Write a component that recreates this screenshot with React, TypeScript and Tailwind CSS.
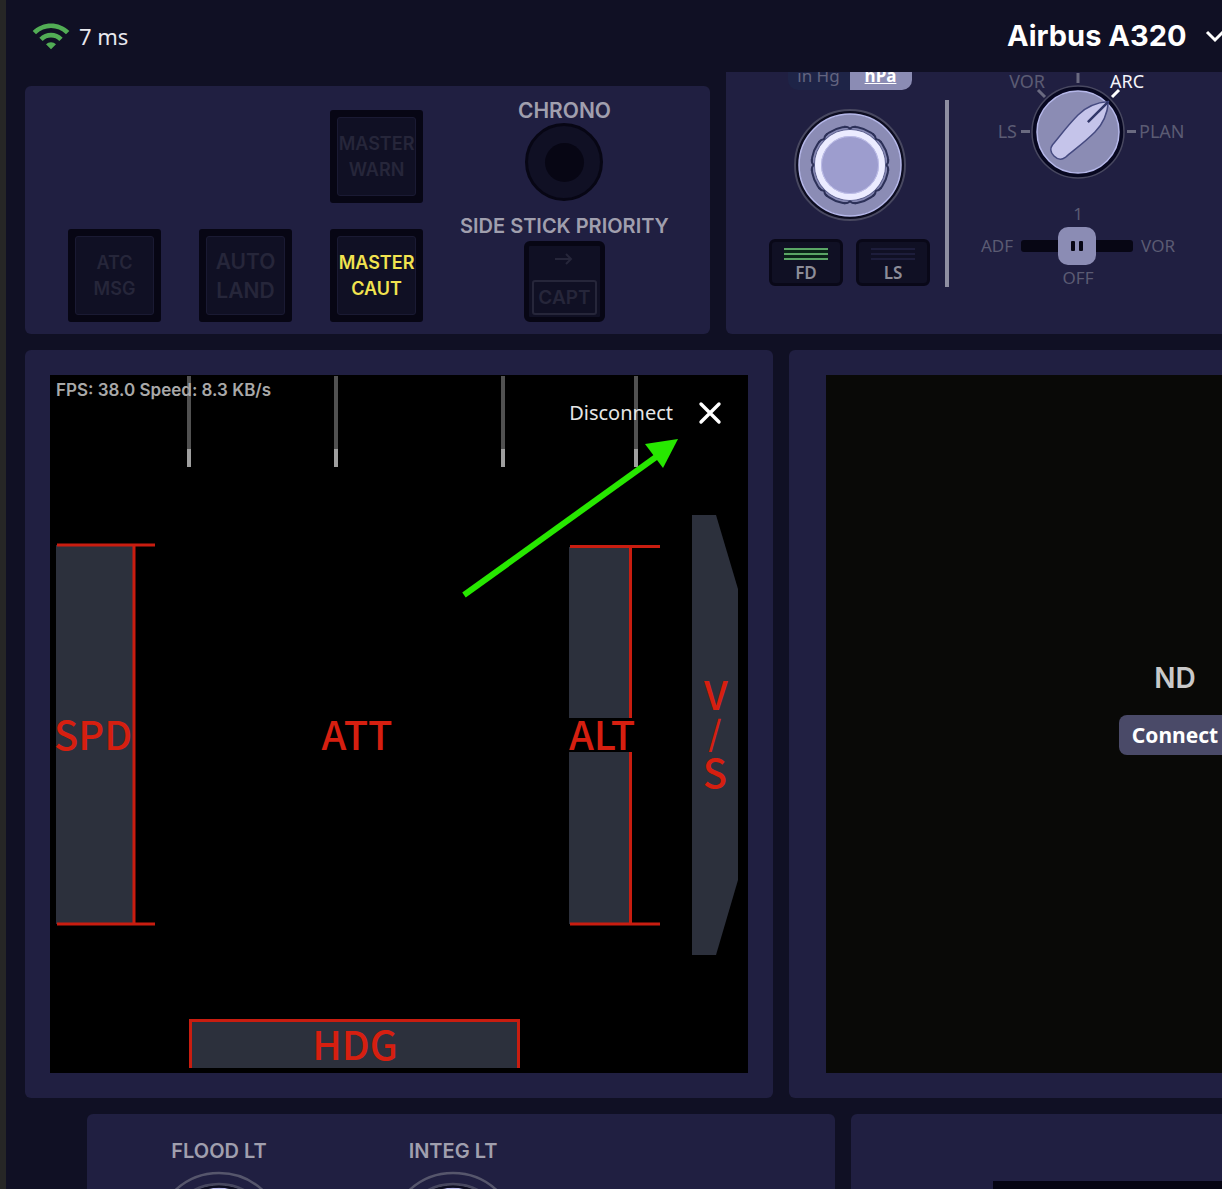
import React from "react";
import { MdWifi } from "react-icons/md";

type AnnunciatorProps = { lines: string[]; lit?: boolean; large?: boolean; className?: string };

function Annunciator({ lines, lit = false, large = false, className = "" }: AnnunciatorProps) {
  return (
    <button
      type="button"
      className={`size-[93px] rounded-[3px] border-[7px] border-[#070614] bg-[#070614] font-['Inter',sans-serif] font-semibold ${
        large ? "text-[21px] leading-[29px]" : "text-[18px] leading-[26px]"
      } ${lit ? "text-[#f2e34f]" : "text-[#26263a]"} ${className}`}
    >
      <span className="flex size-full flex-col items-center justify-center rounded-[3px] border border-[#1a1a33] bg-[#101024]">
        {lines.map((line) => (
          <span key={line}>{line}</span>
        ))}
      </span>
    </button>
  );
}

function KnobFace() {
  const notches = [0, 45, 90, 135, 180, 225, 270, 315];
  return (
    <g>
      <circle r="55" fill="#0c0c20" stroke="#484860" strokeWidth="2" />
      <circle r="51" fill="#8b8cb5" stroke="#b6b8ea" strokeWidth="1.5" />
      <circle r="38.5" fill="#8587b2" stroke="#2c3058" strokeWidth="2" />
      <circle r="36" fill="#5d618e" />
      {notches.map((angle) => (
        <g key={angle} transform={`rotate(${angle})`}>
          <path d="M-5 -41V-38.5Q-2 -38.500 -1 -37Q0 -36 1 -37Q2 -38.500 5 -38.500V-41Z" fill="#8b8cb5" />
          <path
            d="M-6 -38.200Q-2 -38.500 -1 -37Q0 -36.200 1 -37Q2 -38.500 6 -38.200"
            fill="none"
            stroke="#2c3058"
            strokeWidth="2"
          />
        </g>
      ))}
      <circle r="35" fill="#b9bade" />
      <circle r="32" fill="none" stroke="#ebebff" strokeWidth="6" />
      <circle r="28.5" fill="#9d9dce" stroke="#bcbce8" strokeWidth="1" />
    </g>
  );
}

function PushLight({ label, on = false }: { label: string; on?: boolean }) {
  const bar = on ? "h-[2px] bg-[#5aa565]" : "h-[2px] bg-[#1d1d3b]";
  return (
    <button
      type="button"
      aria-pressed={on}
      className="flex h-[47px] w-[74px] flex-col items-center rounded-[6px] border-[3px] border-[#090818] bg-[#101024] pt-[6px] text-[17px] font-semibold leading-[22px] text-[#8d8d98]"
    >
      <span className={`flex w-11 flex-col gap-[3px] ${on ? "bg-[#0a2218]" : ""}`}>
        <span className={bar} />
        <span className={bar} />
        <span className={bar} />
      </span>
      <span className="mt-[2px]">{label}</span>
    </button>
  );
}

function ModeSelector() {
  return (
    <svg viewBox="0 0 216 124" className="h-[124px] w-[216px]" role="img" aria-label="ND mode selector">
      <g fontSize="18" fill="#5b5b73">
        <text x="75" y="32" textAnchor="end">VOR</text>
        <text x="140" y="32" fill="#f4f4fa">ARC</text>
        <text x="47" y="82" textAnchor="end">LS</text>
        <text x="169" y="82">PLAN</text>
      </g>
      <g stroke="#6a6a80" strokeWidth="3">
        <path d="M108 17V27M68 34L75 41M51 75.500H60M157 75.500H166" />
        <path d="M142 41L149 34" stroke="#ffffff" />
      </g>
      <g transform="translate(108 76)">
        <circle r="46" fill="#070720" stroke="#484860" strokeWidth="1.5" />
        <circle r="41" fill="#8b8cb4" stroke="#b6b8ea" strokeWidth="1.5" />
        <g transform="rotate(45)">
          <path
            d="M0 -43C6 -36 12 -25 12 -12C12 2 10 15 9 27Q8 34 0 34Q-8 34 -9 27C-10 15 -12 2 -12 -12C-12 -25 -6 -36 0 -43Z"
            fill="#c5c4ea"
            stroke="#454a80"
            strokeWidth="1.5"
          />
          <path d="M0 -43V-14" stroke="#303668" strokeWidth="2.5" />
        </g>
      </g>
    </svg>
  );
}

function FlightDisplay() {
  return (
    <svg viewBox="0 0 698 698" className="block w-full" role="img" aria-label="Primary flight display">
      <rect width="698" height="698" fill="#000000" />
      <g strokeWidth="4">
        <path d="M139 1V74M286 1V74M453 1V74M586 1V74" stroke="#515151" />
        <path d="M139 74V92M286 74V92M453 74V92M586 74V92" stroke="#9f9f9f" />
      </g>
      <g fill="#2c303c">
        <rect x="6" y="170" width="78" height="379" />
        <rect x="519" y="172" width="61" height="171" />
        <rect x="519" y="377" width="61" height="172" />
        <path d="M642 140H666L688 214V505L666 580H642Z" />
        <rect x="140" y="645" width="329" height="48" />
      </g>
      <g stroke="#c91d10" strokeWidth="3" fill="none">
        <path d="M7 170H105M84 170V549M7 549H105" />
        <path d="M520 171.500H610M580.500 172V343M580.500 377V549M520 549H610" />
        <path d="M140.500 693V645.500H468.500V693" />
      </g>
      <g
        fill="#d61f10"
        fontSize="40"
        textAnchor="middle"
        className="font-['Noto_Sans_CJK_SC',sans-serif] font-medium"
      >
        <text x="43" y="375">SPD</text>
        <text x="307" y="375">ATT</text>
        <text x="552" y="375">ALT</text>
        <text x="666" y="335">V</text>
        <text x="665" y="371" fontSize="34">/</text>
        <text x="665" y="413">S</text>
        <text x="305" y="685">HDG</text>
      </g>
    </svg>
  );
}

function LightKnob({ label }: { label: string }) {
  return (
    <div className="flex w-[234px] flex-col items-center">
      <span className="font-['Inter',sans-serif] text-[20px] font-semibold leading-[26px] text-[#a09fae]">{label}</span>
      <button type="button" aria-label={label} className="mt-[7px]">
        <svg viewBox="-66 -66 132 132" className="size-[132px]" aria-hidden="true">
          <circle r="64" fill="none" stroke="#56566c" strokeWidth="2.5" />
          <g transform="scale(0.95)">
            <KnobFace />
          </g>
          <circle r="50.500" fill="none" stroke="#0c0c20" strokeWidth="2" />
          <circle r="53.500" fill="none" stroke="#484860" strokeWidth="1.500" />
        </svg>
      </button>
    </div>
  );
}

const panel = "rounded-l-[6px] bg-[#201f41]";

export default function App() {
  return (
    <div className="flex h-screen flex-col overflow-hidden border-l-[6px] border-[#262626] bg-[#101024] font-['Noto_Sans',sans-serif] text-white">
      <header className="flex h-[72px] shrink-0 items-center justify-between overflow-hidden pl-[25px]">
        <div className="flex items-center gap-2">
          <MdWifi className="size-10 text-[#52ad55]" aria-hidden="true" />
          <span className="text-[22px] leading-[30px] text-[#e8e8ee]">7 ms</span>
        </div>
        <div className="-mr-1 flex items-center gap-[17px]">
          <select
            aria-label="Aircraft"
            className="appearance-none bg-transparent font-['Inter',sans-serif] text-[29px] font-bold leading-[38px] text-white"
          >
            <option>Airbus A320</option>
          </select>
          <svg viewBox="0 0 22 22" className="size-[22px]" fill="none" aria-hidden="true">
            <path d="M3 7L11 15L19 7" stroke="#ffffff" strokeWidth="3" />
          </svg>
        </div>
      </header>

      <main className="flex min-h-0 flex-1 flex-col gap-4 overflow-hidden pl-[19px]">
        <div className="grid shrink-0 grid-cols-[685fr_496fr] gap-4">
          <section className={`${panel} mt-[14px] flex h-[248px] gap-[37px] rounded-r-[6px] pl-[43px] pt-6`}>
            <div className="grid grid-cols-3 content-start gap-x-[38px] gap-y-[26px]">
              <Annunciator lines={["MASTER", "WARN"]} className="col-start-3" />
              <Annunciator lines={["ATC", "MSG"]} className="col-start-1" />
              <Annunciator lines={["AUTO", "LAND"]} large />
              <Annunciator lines={["MASTER", "CAUT"]} lit />
            </div>
            <div className="-mt-[13px] flex flex-col items-center font-['Inter',sans-serif] font-semibold text-[#a09fae]">
              <span className="text-[21px] leading-[27px]">CHRONO</span>
              <button
                type="button"
                aria-label="Chrono"
                className="-mt-px flex size-[78px] shrink-0 items-center justify-center rounded-full border-[3px] border-[#070614] bg-[#101024]"
              >
                <span className="size-[39px] rounded-full bg-[#070614]" />
              </button>
              <span className="mt-3 whitespace-nowrap text-[20px] leading-[26px]">SIDE STICK PRIORITY</span>
              <button
                type="button"
                className="mt-[2px] flex h-[81px] w-[81px] flex-col items-center rounded-[6px] border-[5px] border-[#070614] bg-[#101024] px-[3px] text-[19px] text-[#26263a]"
              >
                <svg viewBox="0 0 18 12" className="mt-[7px] h-3 w-[18px]" fill="none" aria-hidden="true">
                  <path d="M0 6H16M11 1L16 6L11 11" stroke="#26263a" strokeWidth="2" />
                </svg>
                <span className="mt-[15px] w-full rounded-[3px] border-2 border-[#26263a] leading-[31px]">CAPT</span>
              </button>
            </div>
          </section>

          <section className={`${panel} -mt-4 flex h-[278px] pl-[43px]`}>
            <div className="flex w-[161px] shrink-0 flex-col items-center">
              <div className="flex h-[34px] w-[124px] shrink-0 overflow-hidden rounded-[10px] text-[17px] leading-[40px]">
                <button type="button" aria-pressed="false" className="flex-1 bg-[#1e2447] text-[#63647f]">
                  in Hg
                </button>
                <button type="button" aria-pressed="true" className="flex-1 bg-[#8b8cb4] font-bold underline">
                  hPa
                </button>
              </div>
              <button type="button" aria-label="Baro reference" className="mt-[18px]">
                <svg viewBox="-57 -57 114 114" className="size-[114px]" aria-hidden="true">
                  <KnobFace />
                </svg>
              </button>
              <div className="mt-[17px] flex w-full justify-between">
                <PushLight label="FD" on />
                <PushLight label="LS" />
              </div>
            </div>
            <div className="ml-[15px] mt-11 h-[187px] w-1 shrink-0 bg-[#8f8fa2]" />
            <div className="ml-[21px] flex w-[216px] shrink-0 flex-col items-center text-[17px] leading-[26px] text-[#5b5b73]">
              <ModeSelector />
              <span className="mt-[21px]">1</span>
              <div className="-my-1 flex items-center gap-2">
                <label htmlFor="nav-source">ADF</label>
                <div className="relative flex h-[46px] w-28 items-center">
                  <input
                    id="nav-source"
                    type="range"
                    min={0}
                    max={2}
                    defaultValue={1}
                    className="h-3 w-full appearance-none rounded-[3px] bg-[#070614] [&::-webkit-slider-thumb]:size-[38px] [&::-webkit-slider-thumb]:appearance-none [&::-webkit-slider-thumb]:rounded-[10px] [&::-webkit-slider-thumb]:bg-[#8b8cb4]"
                  />
                  <span className="pointer-events-none absolute inset-0 flex items-center justify-center gap-1">
                    <span className="h-[10px] w-1 rounded-[1px] bg-[#070614]" />
                    <span className="h-[10px] w-1 rounded-[1px] bg-[#070614]" />
                  </span>
                </div>
                <label htmlFor="nav-source">VOR</label>
              </div>
              <span>OFF</span>
            </div>
          </section>
        </div>

        <div className="grid shrink-0 grid-cols-[748fr_433fr] gap-4">
          <section className={`${panel} rounded-r-[6px] p-[25px]`}>
            <div className="relative">
              <FlightDisplay />
              <p className="absolute left-[6px] top-[4px] font-['Inter',sans-serif] text-[17px] font-semibold leading-[22px] text-[#a9a9a9]">
                FPS: 38.0 Speed: 8.3 KB/s
              </p>
              <button
                type="button"
                className="absolute right-[26px] top-[23px] flex items-center gap-[25px] text-[20px] leading-[30px] text-[#e6e6e6]"
              >
                Disconnect
                <svg viewBox="0 0 24 24" className="size-6" fill="none" aria-hidden="true">
                  <path d="M3 3L21 21M21 3L3 21" stroke="#ffffff" strokeWidth="3.400" strokeLinecap="round" />
                </svg>
              </button>
              <svg
                viewBox="0 0 216 162"
                className="pointer-events-none absolute right-[70px] top-[63px] h-[162px] w-[216px]"
                aria-hidden="true"
              >
                <path d="M2 157L194 19" stroke="#27e800" strokeWidth="6" />
                <path d="M216 1L183 6L201 30Z" fill="#27e800" />
              </svg>
            </div>
          </section>
          <section className={`${panel} flex min-w-0 overflow-hidden py-[25px] pl-[37px]`}>
            <div className="flex aspect-square w-[698px] shrink-0 flex-col items-center justify-center gap-[18px] bg-[#090907] pb-[34px]">
              <span className="font-['Inter',sans-serif] text-[28px] font-semibold leading-[38px] text-[#c9c9c9]">ND</span>
              <button
                type="button"
                className="rounded-[8px] bg-[#4a4a68] px-[13px] text-[21px] font-bold leading-[40px] text-white"
              >
                Connect
              </button>
            </div>
          </section>
        </div>

        <div className="grid min-h-0 flex-1 grid-cols-[748fr_371fr] gap-4 pl-[62px]">
          <section className={`${panel} flex h-[260px] rounded-r-[6px] pl-[15px] pt-6`}>
            <LightKnob label="FLOOD LT" />
            <LightKnob label="INTEG LT" />
          </section>
          <section className={`${panel} h-[260px] pl-[142px] pt-[67px]`}>
            <div className="h-full bg-[#050412]" />
          </section>
        </div>
      </main>
    </div>
  );
}
